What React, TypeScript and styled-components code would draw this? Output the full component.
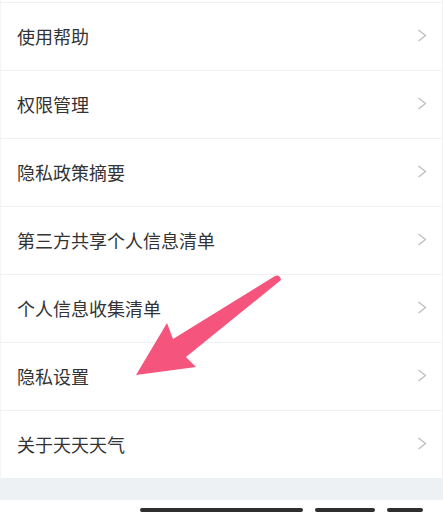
import React from 'react';
import styled, { createGlobalStyle } from 'styled-components';

const GlobalStyle = createGlobalStyle`
  html, body {
    margin: 0;
    padding: 0;
    background: #ffffff;
  }
`;

const Screen = styled.div`
  position: relative;
  width: 443px;
  height: 519px;
  overflow: hidden;
  background: #ffffff;
  font-family: 'Noto Sans CJK SC', 'Noto Sans', sans-serif;
  display: flex;
  flex-direction: column;
`;

const List = styled.ul`
  list-style: none;
  margin: 0;
  padding: 2px 0 0;
  border-left: 1px solid #f4f4f4;
  border-right: 1px solid #f0f0f0;
`;

const Row = styled.li`
  box-sizing: border-box;
  height: 68px;
  border-top: 1px solid #f1f1f1;
  display: flex;
  align-items: center;
  justify-content: space-between;
  padding: 0 15px 2px 16px;
`;

const Label = styled.span`
  font-size: 18px;
  line-height: 24px;
  color: #333333;
`;

const Band = styled.div`
  height: 22px;
  background: #edf1f4;
`;

const Footer = styled.div`
  flex: 1;
  display: flex;
  align-items: center;
  justify-content: flex-end;
  gap: 12px;
  padding: 0 20px 0 0;
`;

const Bar = styled.div<{ $w: number }>`
  width: ${(p) => p.$w}px;
  height: 4px;
  border-radius: 2px;
  background: #2e2e2e;
`;

const Arrow = styled.svg`
  position: absolute;
  left: 0;
  top: 0;
  pointer-events: none;
`;

const items = [
  '使用帮助',
  '权限管理',
  '隐私政策摘要',
  '第三方共享个人信息清单',
  '个人信息收集清单',
  '隐私设置',
  '关于天天天气',
];

function Chevron() {
  return (
    <svg width="10" height="13" viewBox="0 0 10 13">
      <polyline points="1.5,1 8.5,6.5 1.5,12" fill="none" stroke="#bdbdbd" strokeWidth="1.3" />
    </svg>
  );
}

export default function App() {
  return (
    <Screen>
      <GlobalStyle />
      <List>
        {items.map((t) => (
          <Row key={t}>
            <Label>{t}</Label>
            <Chevron />
          </Row>
        ))}
      </List>
      <Band />
      <Footer>
        <Bar $w={163} />
        <Bar $w={60} />
        <Bar $w={36} />
      </Footer>
      <Arrow width="443" height="519" viewBox="0 0 443 519">
        <path
          d="M136 375 L167 323 L173 339 L275 276 Q280 274 281 280 L186 357 L196 367 Z"
          fill="#f5547c"
          strokeLinejoin="round"
        />
      </Arrow>
    </Screen>
  );
}
